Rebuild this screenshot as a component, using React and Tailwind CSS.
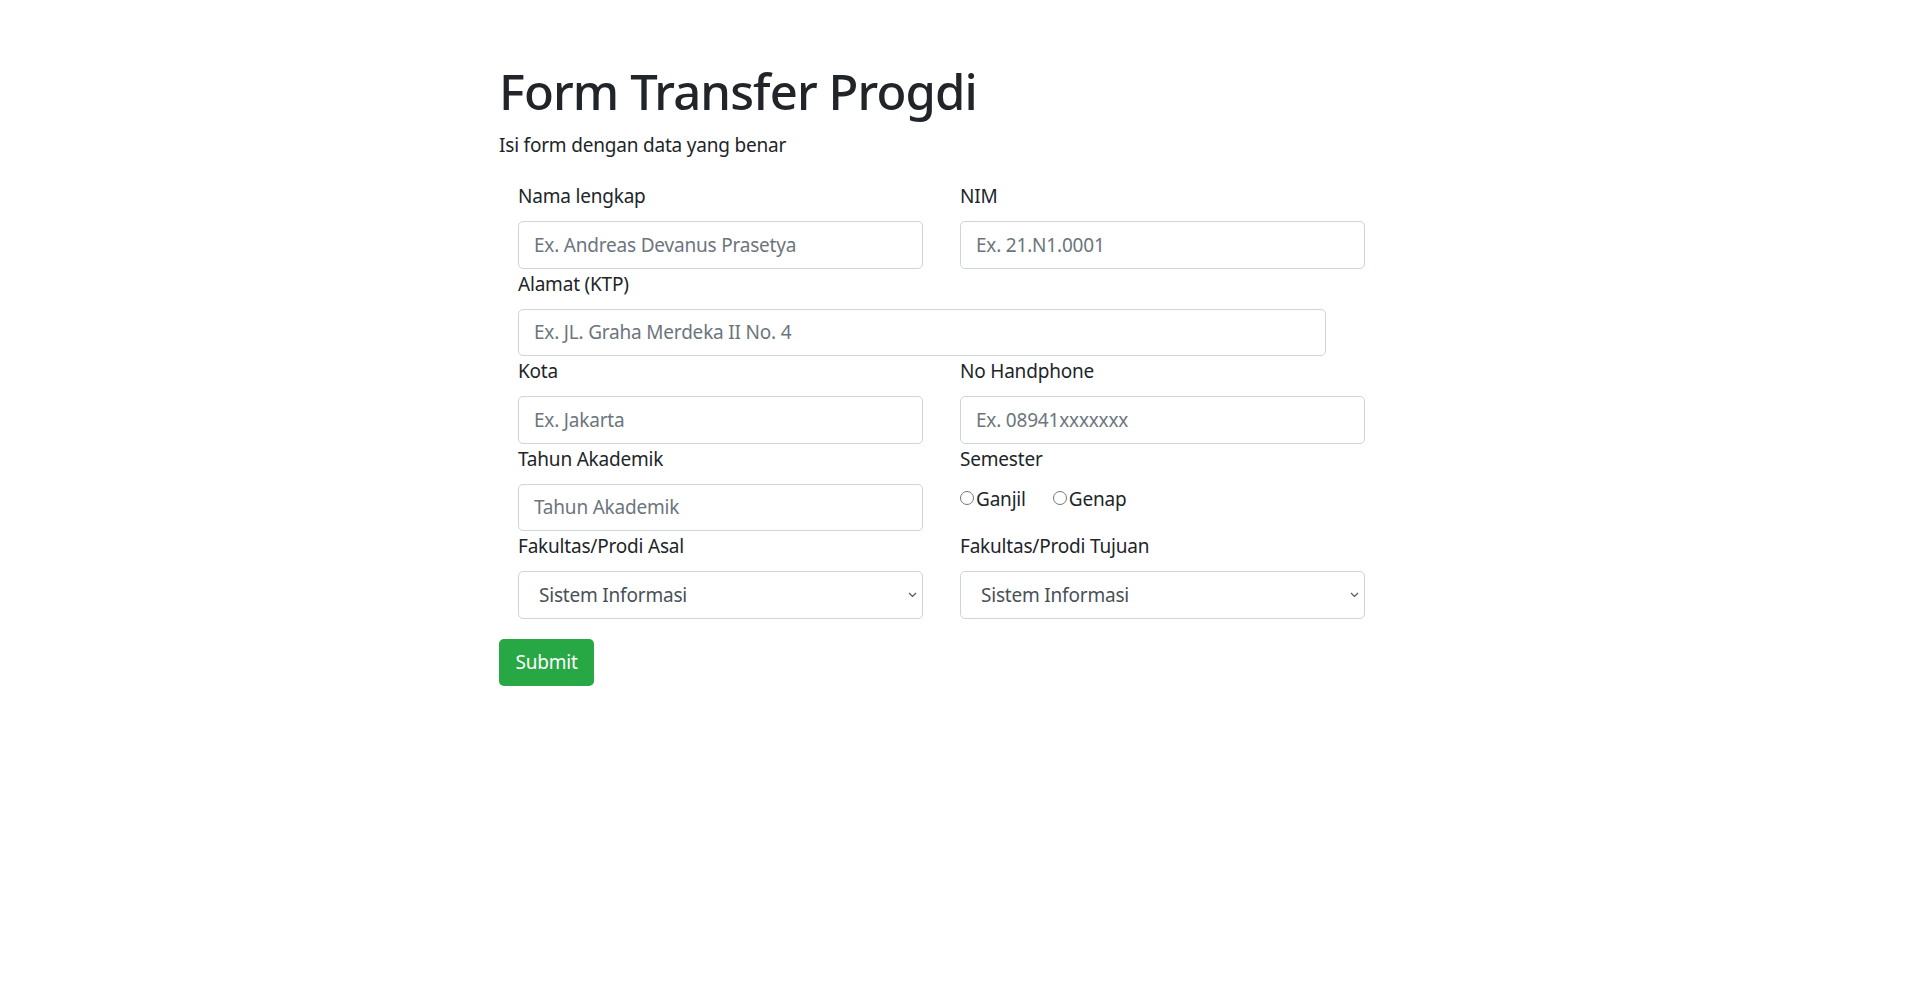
const font = { fontFamily: '"Noto Sans", "Open Sans", sans-serif' };

const Field = ({ label, placeholder, wide }) => (
  <div>
    <label className="block h-[30px] leading-[30px] mb-[10px] text-[19px] tracking-[-0.2px] text-[#212529]">
      {label}
    </label>
    <input
      type="text"
      placeholder={placeholder}
      className={`${wide ? "w-[808px]" : "w-full"} h-[47.5px] px-[15px] text-[19px] tracking-[-0.2px] text-[#495057] placeholder:text-[#6c757d] bg-white border border-[#ced4da] rounded-[5px] outline-none`}
    />
  </div>
);

const SelectField = ({ label }) => (
  <div>
    <label className="block h-[30px] leading-[30px] mb-[10px] text-[19px] tracking-[-0.2px] text-[#212529]">
      {label}
    </label>
    <div className="relative">
      <select className="appearance-none w-full h-[47.5px] pl-[20px] pr-[30px] text-[19px] tracking-[-0.2px] text-[#495057] bg-white border border-[#ced4da] rounded-[5px] outline-none">
        <option>Sistem Informasi</option>
        <option>Teknik Informatika</option>
      </select>
      <svg
        className="absolute right-[6px] top-[21px] pointer-events-none"
        width="9"
        height="6"
        viewBox="0 0 9 6"
        fill="none"
      >
        <path d="M1 1l3.5 3.5L8 1" stroke="#555" strokeWidth="1.2" />
      </svg>
    </div>
  </div>
);

const Radio = ({ label }) => (
  <label className="flex items-center">
    <span className="inline-block w-[14px] h-[14px] rounded-full border-[1.5px] border-[#767676] bg-white mr-[2px] -mt-[2px]" />
    <span>{label}</span>
  </label>
);

export default function App() {
  return (
    <div className="min-h-screen bg-white" style={font}>
      <div className="w-[920px] mx-auto pt-[62px]">
        <h1 className="text-[49px] leading-[58px] tracking-[-0.9px] font-medium text-[#212529] mb-[10px]">
          Form Transfer Progdi
        </h1>
        <p className="text-[19px] tracking-[-0.2px] leading-[30px] text-[#212529] mb-[21px]">
          Isi form dengan data yang benar
        </p>
        <form>
          <div className="grid grid-cols-2 gap-x-[37px] w-[847px] ml-[19px]">
            <Field label="Nama lengkap" placeholder="Ex. Andreas Devanus Prasetya" />
            <Field label="NIM" placeholder="Ex. 21.N1.0001" />
            <div className="col-span-2">
              <Field label="Alamat (KTP)" placeholder="Ex. JL. Graha Merdeka II No. 4" wide />
            </div>
            <Field label="Kota" placeholder="Ex. Jakarta" />
            <Field label="No Handphone" placeholder="Ex. 08941xxxxxxx" />
            <Field label="Tahun Akademik" placeholder="Tahun Akademik" />
            <div>
              <div className="h-[30px] leading-[30px] mb-[10px] text-[19px] tracking-[-0.2px] text-[#212529]">
                Semester
              </div>
              <div className="flex gap-[27px] h-[30px] leading-[30px] text-[19px] tracking-[-0.2px] text-[#212529]">
                <Radio label="Ganjil" />
                <Radio label="Genap" />
              </div>
            </div>
            <SelectField label="Fakultas/Prodi Asal" />
            <SelectField label="Fakultas/Prodi Tujuan" />
          </div>
          <button
            type="button"
            className="mt-[20px] h-[47.5px] w-[95px] text-[19px] tracking-[-0.2px] text-white bg-[#28a745] rounded-[5px]"
          >
            Submit
          </button>
        </form>
      </div>
    </div>
  );
}
